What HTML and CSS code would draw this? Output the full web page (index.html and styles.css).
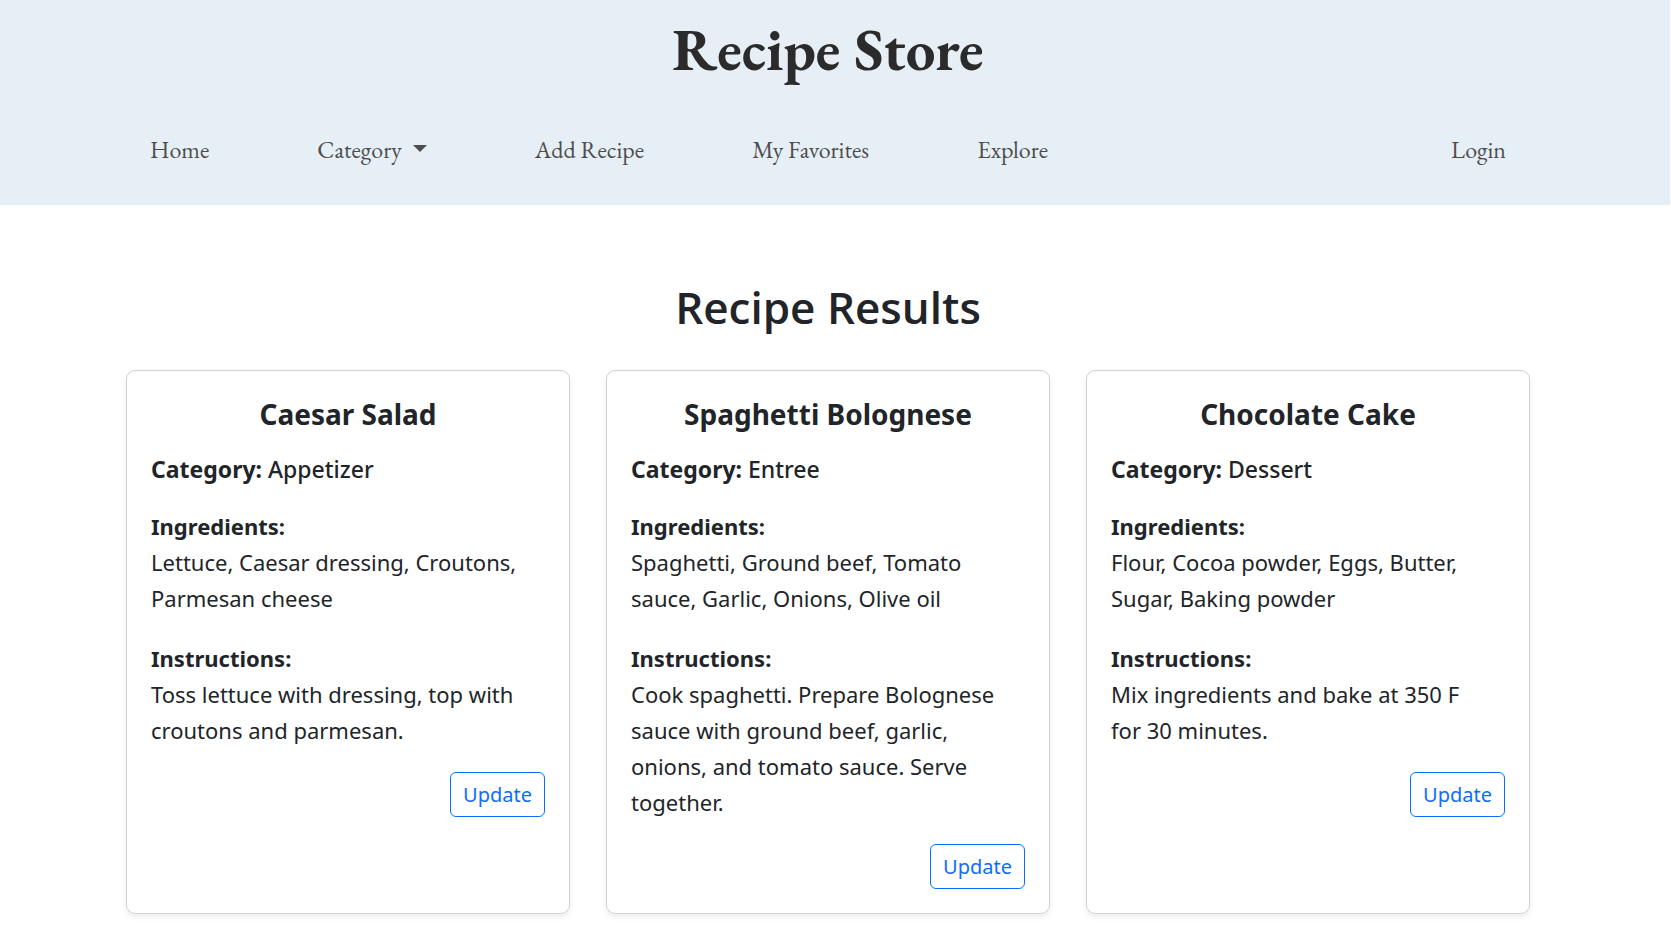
FILE: index.html
```html
<!DOCTYPE html>
<html lang="en">
<head>
  <meta charset="utf-8">
  <meta name="viewport" content="width=device-width, initial-scale=1">
  <title>Recipe Store</title>
  <link rel="stylesheet" href="styles.css">
</head>
<body>
  <header class="site-header">
    <h1 class="site-title">Recipe Store</h1>
    <nav class="site-nav">
      <a class="nav-link" href="#home">Home</a>
      <button class="nav-link nav-toggle" type="button" aria-haspopup="true">Category<span class="caret"></span></button>
      <a class="nav-link" href="#add">Add Recipe</a>
      <a class="nav-link" href="#favorites">My Favorites</a>
      <a class="nav-link" href="#explore">Explore</a>
      <a class="nav-link nav-login" href="#login">Login</a>
    </nav>
  </header>
  <main class="results">
    <h2 class="results-title">Recipe Results</h2>
    <div class="card-grid">
      <article class="card">
        <h3 class="card-title">Caesar Salad</h3>
        <h4 class="card-category"><strong>Category:</strong> Appetizer</h4>
        <p class="card-text"><strong>Ingredients:</strong><br>Lettuce, Caesar dressing, Croutons, Parmesan cheese</p>
        <p class="card-text"><strong>Instructions:</strong><br>Toss lettuce with dressing, top with croutons and parmesan.</p>
        <button class="update" type="button">Update</button>
      </article>
      <article class="card">
        <h3 class="card-title">Spaghetti Bolognese</h3>
        <h4 class="card-category"><strong>Category:</strong> Entree</h4>
        <p class="card-text"><strong>Ingredients:</strong><br>Spaghetti, Ground beef, Tomato sauce, Garlic, Onions, Olive oil</p>
        <p class="card-text"><strong>Instructions:</strong><br>Cook spaghetti. Prepare Bolognese sauce with ground beef, garlic, onions, and tomato sauce. Serve together.</p>
        <button class="update" type="button">Update</button>
      </article>
      <article class="card">
        <h3 class="card-title">Chocolate Cake</h3>
        <h4 class="card-category"><strong>Category:</strong> Dessert</h4>
        <p class="card-text"><strong>Ingredients:</strong><br>Flour, Cocoa powder, Eggs, Butter, Sugar, Baking powder</p>
        <p class="card-text"><strong>Instructions:</strong><br>Mix ingredients and bake at 350 F for&nbsp;30 minutes.</p>
        <button class="update" type="button">Update</button>
      </article>
    </div>
  </main>
</body>
</html>
```
FILE: styles.css
```css
*,
*::before,
*::after {
  box-sizing: border-box;
}

body {
  margin: 0;
  padding-right: 15px;
  background: #fff;
  color: #212529;
  font-family: "Segoe UI", "Noto Sans", "Open Sans", sans-serif;
  font-size: 22px;
  line-height: 36px;
}

h1, h2, h3, h4, p {
  margin: 0;
}

.site-header {
  margin-right: -14px;
  padding: 16px 164px 37px 150px;
  background: #e7eff6;
  font-family: "EB Garamond", "Liberation Serif", serif;
}

.site-title {
  color: #2b2b2b;
  font-size: 59px;
  line-height: 68px;
  font-weight: 700;
  text-align: center;
}

.site-nav {
  display: flex;
  align-items: center;
  gap: 108px;
  padding-top: 48px;
}

.nav-link {
  padding: 0;
  border: 0;
  background: none;
  color: #4d4d4d;
  font: inherit;
  font-size: 24px;
  line-height: 36px;
  text-decoration: none;
  white-space: nowrap;
}

.nav-toggle {
  display: flex;
  align-items: center;
  gap: 11px;
}

.caret {
  margin-bottom: 4px;
  border-top: 7px solid;
  border-right: 7px solid transparent;
  border-left: 7px solid transparent;
}

.nav-login {
  margin-left: auto;
}

.results {
  padding: 72px 126px 15px;
}

.results-title {
  font-family: "Segoe UI", "Open Sans", sans-serif;
  font-size: 44px;
  line-height: 60px;
  font-weight: 600;
  text-align: center;
}

.card-grid {
  display: grid;
  grid-template-columns: repeat(3, minmax(0, 1fr));
  gap: 36px;
  margin-top: 33px;
}

.card {
  display: flex;
  flex-direction: column;
  padding: 24px;
  border: 1px solid #d2d2d2;
  border-radius: 9px;
  box-shadow: 0 3px 6px rgba(0, 0, 0, 0.075);
}

.card-title {
  margin-bottom: 22px;
  font-size: 28px;
  line-height: 38px;
  font-weight: 700;
  text-align: center;
}

.card-category {
  margin-bottom: 24px;
  font-size: 23px;
  line-height: 29px;
  font-weight: 500;
}

.card-text {
  margin-bottom: 24px;
}

.update {
  align-self: flex-end;
  padding: 6px 12px;
  border: 1px solid #0d6efd;
  border-radius: 6px;
  background: transparent;
  color: #0d6efd;
  font: inherit;
  font-size: 20px;
  line-height: 31px;
}
```
